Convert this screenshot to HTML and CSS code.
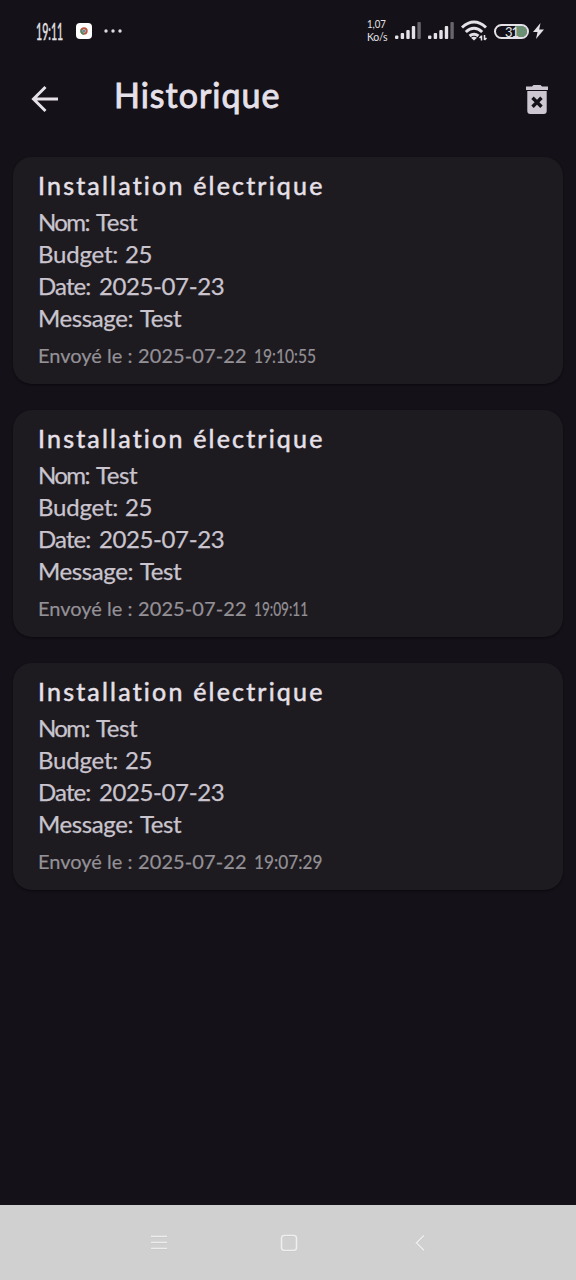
FILE: index.html
```html
<!DOCTYPE html>
<html lang="fr">
<head>
<meta charset="utf-8">
<title>Historique</title>
<link rel="stylesheet" href="styles.css">
</head>
<body>
<div class="screen">
  <header class="status">
    <span class="clock">19:11</span>
    <svg class="app" width="16" height="16" viewBox="0 0 16 16"><rect width="16" height="16" rx="4" fill="#fff"/><circle cx="8" cy="8" r="2.7" fill="none" stroke="#b9573f" stroke-width="2"/><path d="M5.6 6.8A2.7 2.7 0 0 0 8 10.7" fill="none" stroke="#4f9163" stroke-width="2"/><circle cx="8" cy="8" r="1.5" fill="#6685a5"/></svg>
    <svg class="dots" width="18" height="4" viewBox="0 0 18 4" fill="#dedce1"><circle cx="2" cy="2" r="1.7"/><circle cx="9" cy="2" r="1.7"/><circle cx="16" cy="2" r="1.7"/></svg>
    <div class="speed"><span class="rate">1,07</span><span class="unit">Ko/s</span></div>
    <svg class="signal" width="26" height="18" viewBox="0 0 26 18" fill="#e4e2e6"><rect y="13.5" width="3.4" height="3.5" rx="1"/><rect x="5.7" y="11" width="3.4" height="6" rx="1"/><rect x="11.3" y="8" width="3.4" height="9" rx="1"/><rect x="16.8" y="4" width="3.4" height="13" rx="1"/><rect x="22.4" y="0" width="3.4" height="17" rx="1" fill="#68656d"/></svg>
    <svg class="signal second" width="26" height="18" viewBox="0 0 26 18" fill="#e4e2e6"><rect y="13.5" width="3.4" height="3.5" rx="1"/><rect x="5.7" y="11" width="3.4" height="6" rx="1"/><rect x="11.3" y="8" width="3.4" height="9" rx="1"/><rect x="16.8" y="4" width="3.4" height="13" rx="1"/><rect x="22.4" y="0" width="3.4" height="17" rx="1" fill="#68656d"/></svg>
    <svg class="wifi" width="28" height="22" viewBox="0 0 28 22" fill="none" stroke="#e4e2e6" stroke-width="3"><path d="M1 7.5Q13-3.5 25 7.5M4.8 12q8.2-7.4 16.4 0M8.6 16q4.4-3.6 8.8 0"/><path d="M10 17.8q3-2 6 0L13 20.5z" fill="#e4e2e6" stroke="none"/><path d="M20.5 20.5v-5m-2 2.5 2-2M23.5 15v5m0 0 2-2" stroke-width="1.5"/></svg>
    <div class="battery"><span>31</span></div>
    <svg class="bolt" width="11" height="16" viewBox="0 0 11 16" fill="#e4e2e6"><path d="M7.5 0 0 9h4.5L3 16l8-9.5H6.2z"/></svg>
  </header>

  <nav class="appbar">
    <svg class="back" width="28" height="28" viewBox="0 0 28 28" fill="none" stroke="#e6e0e9" stroke-width="3"><path d="M14.5 2 2.5 14l12 12M3 14h24"/></svg>
    <h1>Historique</h1>
    <svg class="trash" width="24" height="30" viewBox="0 0 24 30"><path fill="#cdc7d2" d="M7 1.5 8.5 0h7L17 1.5h6V5H1V1.5zM2.3 6h19.4v20a3 3 0 0 1-3 3H5.3a3 3 0 0 1-3-3z"/><path d="m7.5 12.7 9 9m0-9-9 9" stroke="#141118" stroke-width="3.4"/></svg>
  </nav>

  <main class="list">
    <article class="card">
      <h2>Installation électrique</h2>
      <p><span class="nom">Nom:</span><span class="value">Test</span></p>
      <p><span class="budget">Budget:</span><span class="value">25</span></p>
      <p><span class="date">Date:</span><span class="value">2025-07-23</span></p>
      <p><span class="message">Message:</span><span class="value">Test</span></p>
      <small><span class="sent">Envoyé le :</span><span class="day">2025-07-22</span><span class="time">19:10:55</span></small>
    </article>
    <article class="card">
      <h2>Installation électrique</h2>
      <p><span class="nom">Nom:</span><span class="value">Test</span></p>
      <p><span class="budget">Budget:</span><span class="value">25</span></p>
      <p><span class="date">Date:</span><span class="value">2025-07-23</span></p>
      <p><span class="message">Message:</span><span class="value">Test</span></p>
      <small><span class="sent">Envoyé le :</span><span class="day">2025-07-22</span><span class="time tight">19:09:11</span></small>
    </article>
    <article class="card">
      <h2>Installation électrique</h2>
      <p><span class="nom">Nom:</span><span class="value">Test</span></p>
      <p><span class="budget">Budget:</span><span class="value">25</span></p>
      <p><span class="date">Date:</span><span class="value">2025-07-23</span></p>
      <p><span class="message">Message:</span><span class="value">Test</span></p>
      <small><span class="sent">Envoyé le :</span><span class="day">2025-07-22</span><span class="time loose">19:07:29</span></small>
    </article>
  </main>

  <footer class="navbar">
    <svg width="18" height="18" viewBox="0 0 18 18"><path d="M1 3.5h16M1 9.5h16M1 15.5h16" stroke="#bfbfbf"/><path d="M1 2.5h16M1 8.5h16M1 14.5h16" stroke="#ededed" stroke-width="1.6"/></svg>
    <svg width="18" height="18" viewBox="0 0 18 18" fill="none"><rect x="1.5" y="2.3" width="15" height="15" rx="3" stroke="#bdbdbd"/><rect x="1.5" y="1.5" width="15" height="15" rx="3" stroke="#efefef" stroke-width="1.5"/></svg>
    <svg width="18" height="18" viewBox="0 0 18 18" fill="none"><path d="m14 2.5-7.5 7.5 7.5 7.5" stroke="#bebebe"/><path d="m14 1.5-7.5 7.5 7.5 7.5" stroke="#eee" stroke-width="1.5"/></svg>
  </footer>
</div>
</body>
</html>
```
FILE: styles.css
```css
* { box-sizing: border-box; }
body { margin: 0; background: #141118; font-family: Lato, "Open Sans", sans-serif; }
h1, h2, p { margin: 0; font-weight: 400; }
svg { display: block; flex: none; }
.screen { width: 576px; height: 1280px; display: flex; flex-direction: column; }

.status { height: 62px; display: flex; align-items: center; padding-left: 36px; color: #e4e2e6; }
.clock { width: 40px; font-size: 23px; -webkit-text-stroke: .5px; white-space: nowrap; transform: scaleX(.46); transform-origin: 0 50%; }
.dots { margin-left: 12px; }
.speed { width: 22px; margin-left: 245px; display: flex; flex-direction: column; align-items: flex-start; white-space: nowrap; }
.rate { font-size: 12px; line-height: 14px; transform: scaleX(.8); transform-origin: 0 50%; margin-top: -3px; }
.unit { font-size: 10.5px; line-height: 12px; letter-spacing: -.3px; }
.signal { margin-left: 6px; }
.second { margin-left: 7px; }
.wifi { margin-left: 7px; }
.battery { width: 35px; height: 15px; margin-left: 5px; padding-left: 9px; border: 2px solid #e4e2e6; border-radius: 8px; font-size: 13px; line-height: 12px; letter-spacing: -1px; background: linear-gradient(90deg, #141118 62%, #6b8f73 62%); background-clip: padding-box; }
.bolt { margin-left: 4px; }

.appbar { height: 95px; display: flex; align-items: flex-start; padding: 23px 27px 0 31px; color: #e6e0e9; }
h1 { flex: 1; margin: -12px 0 0 55px; font-size: 34px; line-height: 44px; letter-spacing: 1px; -webkit-text-stroke: .9px; }

.list { flex: 1; padding: 0 13px; display: flex; flex-direction: column; gap: 26px; }
.card { height: 227px; padding: 11px 25px 0; border-radius: 19px; background: #1e1b20; box-shadow: 0 1px 2px #0c0a0f; color: #c9c4ce; white-space: nowrap; }
h2 { font-size: 25px; line-height: 34px; letter-spacing: 2.2px; color: #e6e0e9; margin-bottom: 4px; -webkit-text-stroke: .5px; }
p { display: flex; font-size: 24px; line-height: 32px; -webkit-text-stroke: .25px; }
.nom { width: 58px; letter-spacing: -1.6px; }
.budget { width: 87px; letter-spacing: -.2px; }
.date { width: 61px; letter-spacing: -.9px; }
.message { width: 102px; letter-spacing: -.4px; }
.value { letter-spacing: -.4px; }
small { display: flex; margin-top: 7px; font-size: 20px; line-height: 28px; color: #949197; -webkit-text-stroke: .2px; }
.sent { width: 100px; }
.day { width: 116px; letter-spacing: .1px; }
.time { transform: scaleX(.78); transform-origin: 0 50%; }
.tight { transform: scaleX(.68); }
.loose { transform: scaleX(.86); }

.navbar { height: 75px; background: #d0d0d0; display: flex; align-items: center; justify-content: center; gap: 112px; padding-left: 1px; }
```
